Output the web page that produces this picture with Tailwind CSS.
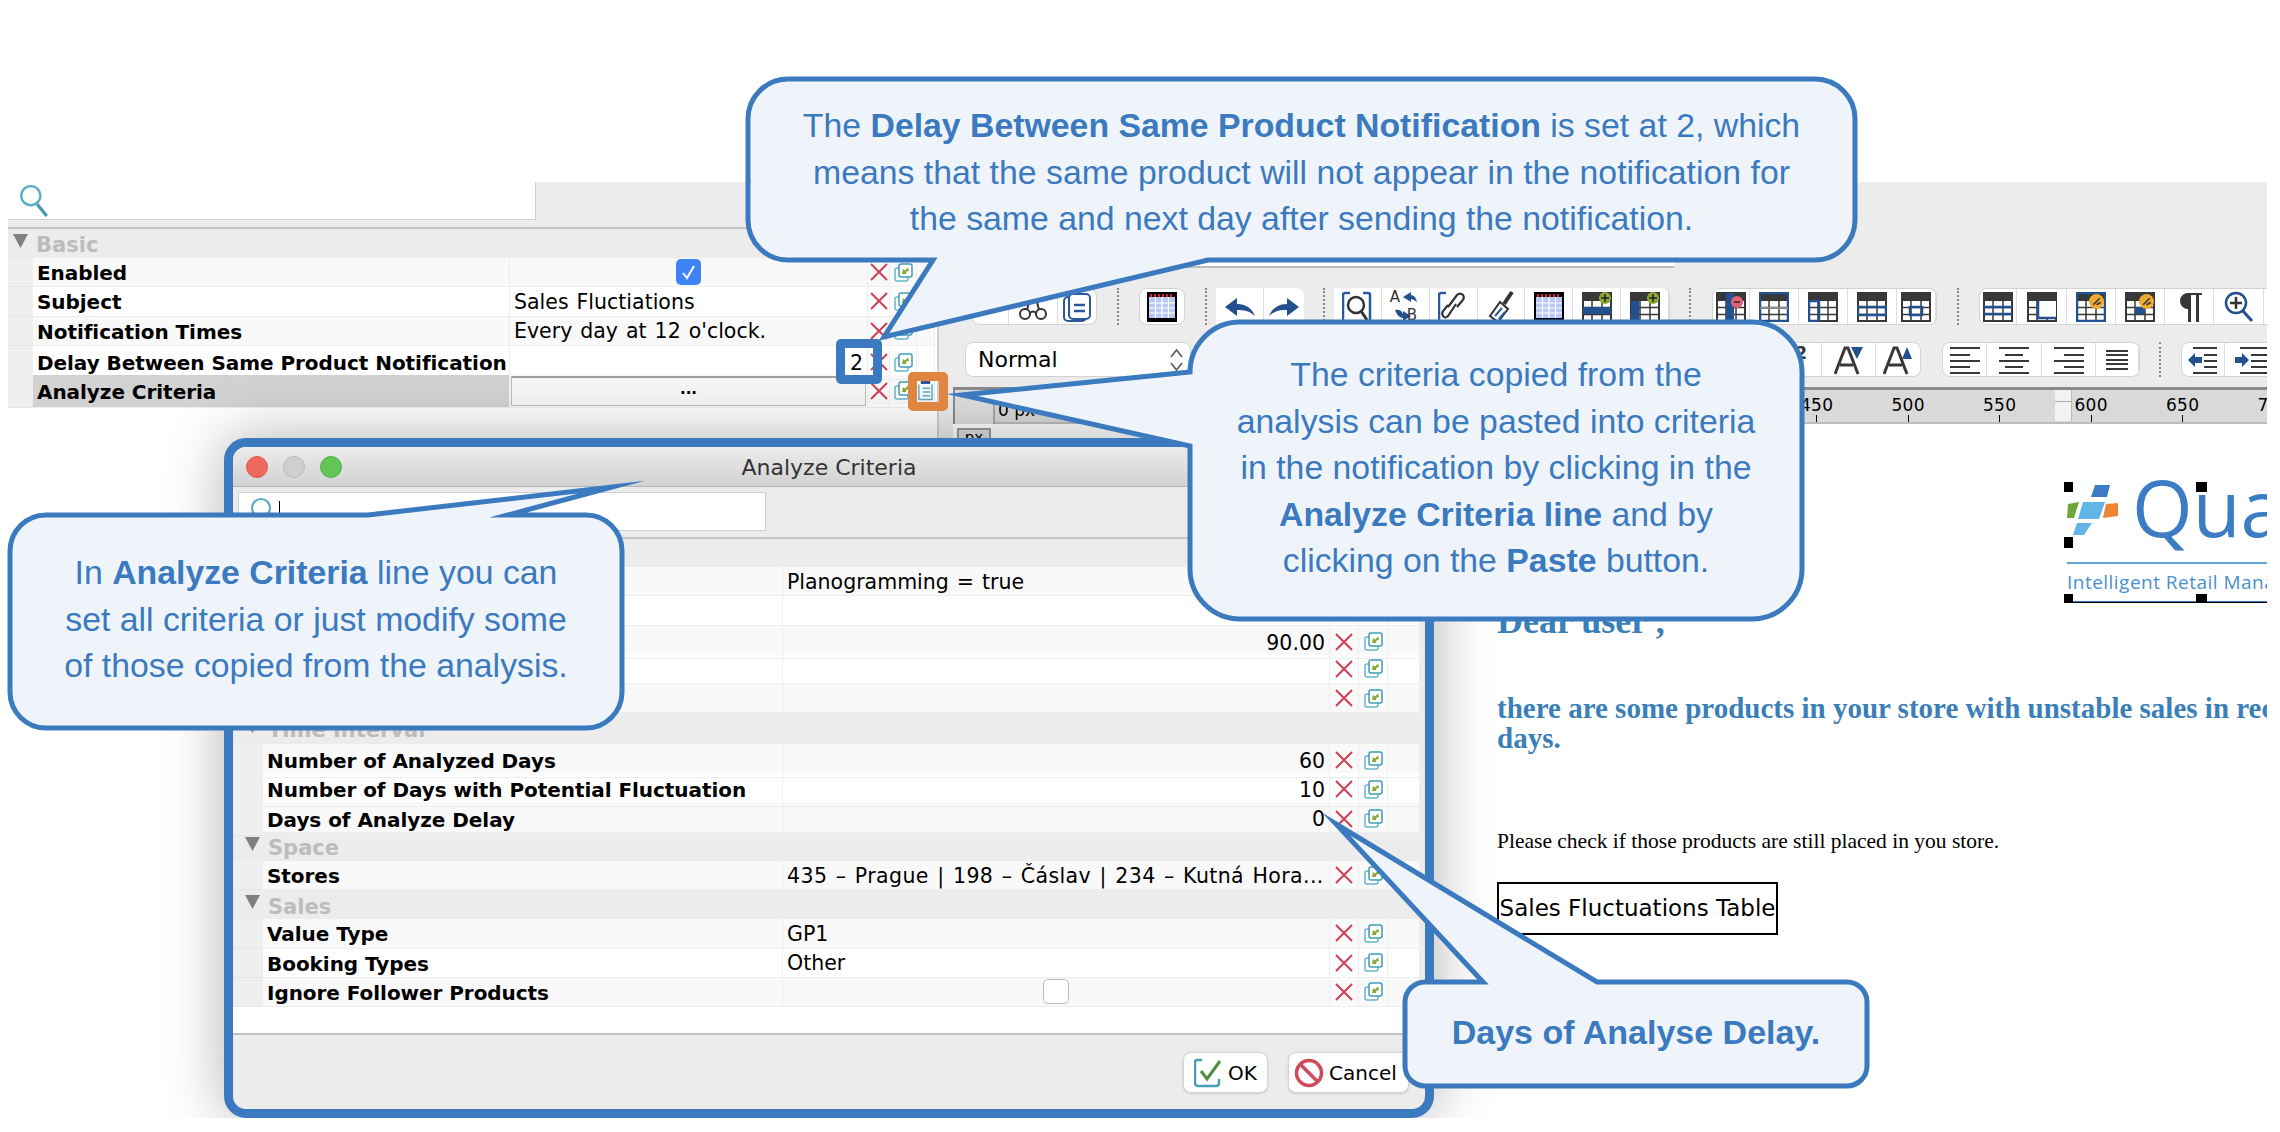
<!DOCTYPE html>
<html lang="en">
  <head>
    <meta charset="UTF-8" />
    <title>Analyze Criteria</title>
    <script src="https://cdn.jsdelivr.net/npm/@tailwindcss/browser@4"></script>
  </head>
  <body class="bg-white w-[2280px] h-[1132px] overflow-hidden relative font-['DejaVu_Sans',sans-serif] text-black">
    <!-- shared icons -->
    <svg class="hidden">
      <symbol id="x" viewBox="0 0 18 18"><path d="M1 1L17 17M17 1L1 17" stroke="#cf3f55" stroke-width="2" fill="none" /></symbol>
      <symbol id="copy" viewBox="0 0 19 19">
        <rect x="1" y="5" width="13" height="13" rx="2" fill="#fff" stroke="#67b6cb" stroke-width="1.5" />
        <rect x="5" y="1" width="13" height="13" rx="2" fill="#fff" stroke="#3f9db8" stroke-width="1.5" />
        <path d="M8 11L9 6L11 7.500L14 4.500L15 8L12.500 8.500L12 11Z" fill="#8aa832" />
      </symbol>
      <symbol id="grid" viewBox="0 0 30 30">
        <rect x="1" y="1" width="28" height="28" fill="#fff" stroke="#383838" stroke-width="2" />
        <rect width="30" height="9" fill="#383838" />
        <path d="M1 15.500H29M1 22.500H29M10 9V29M20 9V29" stroke="#383838" stroke-width="1.500" />
      </symbol>
      <symbol id="cal" viewBox="0 0 30 30">
        <rect width="30" height="30" fill="#000" />
        <rect x="2" y="5" width="26" height="21" fill="#b7c9f2" />
        <path d="M2 11H28M2 16H28M2 21H28M8.500 5V26M15 5V26M21.500 5V26" stroke="#fff" stroke-width="1.200" />
        <path d="M3 3.500H27" stroke="#d81f3a" stroke-width="3" stroke-dasharray="2 2" />
      </symbol>
      <symbol id="wrench" viewBox="0 0 14 14"><circle cx="7" cy="7" r="7" fill="#eeaa33" /><path d="M4 10L10 4M7 10L11 8" stroke="#383838" stroke-width="1.500" /></symbol>
    </svg>

    <!-- application -->
    <div class="h-[1118px] pt-[182px] pl-2 pr-[13px] overflow-hidden relative">
      <div class="flex h-full">
        <!-- left properties panel -->
        <div class="w-[929px] flex-none">
          <div class="h-[47px] bg-[#ececec] border-b-2 border-[#c4c4c4]">
            <div class="w-[528px] h-[38px] bg-white border-b border-r border-[#d0d0d0] flex items-center pl-[10px]">
              <svg width="32" height="34" viewBox="0 0 30 32"><circle cx="12" cy="11" r="9" fill="none" stroke="#58aec6" stroke-width="2.200" /><path d="M18 19L27 30" stroke="#4b97b3" stroke-width="3" /></svg>
            </div>
          </div>
          <div id="left_table" class="w-[927px]"></div>
        </div>

        <!-- right editor panel -->
        <div class="flex-1 border-l-2 border-[#cfcfcf] bg-[#ececec] flex flex-col min-w-0">
          <div class="h-[86px] flex-none pt-[58px] pl-[240px]"><div class="w-[495px] h-[28px] bg-white border-b-2 border-[#bbbbbb]"></div></div>

          <!-- toolbar row 1 -->
          <div class="h-[37px] mt-5 flex-none flex items-stretch pl-[33px] overflow-hidden [&>*]:flex-none">
            <div class="w-[125px] flex bg-white rounded-lg border border-[#d3d3d3]">
              <div class="w-[36px] border-r border-[#ddd]"></div>
              <div class="w-[49px] border-r border-[#ddd] flex items-center justify-center">
                <svg width="30" height="30" viewBox="0 0 30 30"><circle cx="7" cy="22" r="5" fill="none" stroke="#333" stroke-width="2" /><circle cx="23" cy="22" r="5" fill="none" stroke="#333" stroke-width="2" /><path d="M12 21Q15 18 18 21M9 18L12 6M21 18L18 6" fill="none" stroke="#333" stroke-width="2" /></svg>
              </div>
              <div class="flex-1 flex items-center justify-center">
                <svg width="30" height="30" viewBox="0 0 30 30"><rect x="2" y="5" width="22" height="24" rx="4" fill="#fff" stroke="#2a5a9c" stroke-width="2" /><rect x="7" y="2" width="21" height="25" rx="4" fill="#fff" stroke="#2a5a9c" stroke-width="2" /><path d="M12 13H23M12 19H23" stroke="#2a5a9c" stroke-width="2.500" /></svg>
              </div>
            </div>
            <div class="w-[2px] ml-[20px] border-l-2 border-dotted border-[#888]"></div>
            <div class="w-[46px] ml-[20px] bg-white rounded-lg border border-[#d3d3d3] flex items-center justify-center"><svg width="30" height="30"><use href="#cal" /></svg></div>
            <div class="w-[2px] ml-[20px] border-l-2 border-dotted border-[#888]"></div>
            <div class="w-[88px] ml-[9px] bg-white rounded-r-lg flex">
              <div class="w-[48px] border-r border-[#ddd] flex items-center justify-center"><svg width="32" height="22" viewBox="0 0 32 22"><path d="M1 11L13 2V8Q26 8 31 20Q24 13 13 14V20Z" fill="#23508e" /></svg></div>
              <div class="flex-1 flex items-center justify-center"><svg width="32" height="22" viewBox="0 0 32 22"><path d="M31 11L19 2V8Q6 8 1 20Q8 13 19 14V20Z" fill="#23508e" /></svg></div>
            </div>
            <div class="w-[2px] ml-[19px] border-l-2 border-dotted border-[#888]"></div>
            <div class="w-[336px] ml-[9px] bg-white rounded-r-lg border-r border-[#d3d3d3] flex [&>div]:w-[48px] [&>div]:border-r [&>div]:border-[#ddd] [&>div]:flex [&>div]:items-center [&>div]:justify-center">
              <div><svg width="30" height="34" viewBox="0 0 30 34"><path d="M8 3H3Q1 3 1 5V30Q1 32 3 32H8M21 3H26Q28 3 28 5V30" fill="none" stroke="#2a5a9c" stroke-width="2.500" /><circle cx="14" cy="15" r="8" fill="none" stroke="#333" stroke-width="2.500" /><path d="M19 21L25 30" stroke="#333" stroke-width="3" /></svg></div>
              <div class="relative"><span class="absolute left-[8px] top-[2px] text-[15px] leading-none text-[#333]">A</span><span class="absolute left-[25px] top-[20px] text-[15px] leading-none text-[#333]">B</span><svg width="32" height="34" viewBox="0 0 32 34"><path d="M14 7L22 2V5Q27 6 28 12Q24 9 22 9V12ZM6 20Q12 19 14 24V21L22 26L14 31V28Q9 28 6 20Z" fill="#23508e" /></svg></div>
              <div><svg width="30" height="34" viewBox="0 0 30 34"><path d="M8 3H3Q1 3 1 5V30Q1 32 3 32H8" fill="none" stroke="#2a5a9c" stroke-width="2.500" /><path d="M10 17L19 5Q22 2 25 5Q27 8 24 11L19 17M18 14L10 26Q7 29 5 26Q3 23 6 20L10 15" fill="none" stroke="#333" stroke-width="2.200" /></svg></div>
              <div><svg width="30" height="34" viewBox="0 0 30 34"><path d="M26 2L18 14" stroke="#333" stroke-width="4" /><path d="M14 12L22 19L12 32L4 26Z" fill="#fff" stroke="#333" stroke-width="2" /><path d="M9 26L16 18M13 29L19 22" stroke="#2a5a9c" stroke-width="2" /></svg></div>
              <div><svg width="30" height="30"><use href="#cal" /></svg></div>
              <div><svg width="30" height="30" viewBox="0 0 30 30"><use href="#grid" /><rect x="1" y="15" width="28" height="7" fill="#23508e" /><circle cx="23" cy="6" r="6" fill="#8ca83a" /><path d="M23 2V10M19 6H27" stroke="#222" stroke-width="1.500" /></svg></div>
              <div class="border-r-0"><svg width="30" height="30" viewBox="0 0 30 30"><use href="#grid" /><rect x="1" y="9" width="8" height="20" fill="#23508e" /><circle cx="23" cy="6" r="6" fill="#8ca83a" /><path d="M23 2V10M19 6H27" stroke="#222" stroke-width="1.500" /></svg></div>
            </div>
            <div class="w-[2px] ml-[19px] border-l-2 border-dotted border-[#888]"></div>
            <div class="w-[225px] ml-[21px] bg-white rounded-lg border border-[#d3d3d3] flex [&>div]:border-r [&>div]:border-[#ddd] [&>div]:flex [&>div]:items-center [&>div]:justify-center">
              <div class="w-[37px]"><svg width="30" height="30" viewBox="0 0 30 30"><use href="#grid" /><rect x="10" y="1" width="8" height="28" fill="#23508e" /><circle cx="21" cy="10" r="6" fill="#e36078" /><path d="M18 10H24" stroke="#222" stroke-width="1.500" /></svg></div>
              <div class="w-[49px]"><svg width="30" height="30" viewBox="0 0 30 30"><use href="#grid" /><rect x="1" y="1" width="28" height="28" fill="none" stroke="#23508e" stroke-width="2.500" /><path d="M1 16H29" stroke="#8a8a8a" stroke-width="2" /></svg></div>
              <div class="w-[49px]"><svg width="30" height="30" viewBox="0 0 30 30"><use href="#grid" /><rect x="1" y="9" width="10" height="20" fill="none" stroke="#23508e" stroke-width="2.500" /></svg></div>
              <div class="w-[49px]"><svg width="30" height="30" viewBox="0 0 30 30"><use href="#grid" /><rect x="1" y="15" width="28" height="8" fill="none" stroke="#23508e" stroke-width="2.500" /></svg></div>
              <div class="flex-1 border-r-0"><svg width="30" height="30" viewBox="0 0 30 30"><use href="#grid" /><rect x="9" y="15" width="12" height="8" fill="none" stroke="#23508e" stroke-width="2.500" /></svg></div>
            </div>
            <div class="w-[2px] ml-[20px] border-l-2 border-dotted border-[#888]"></div>
            <div class="w-[320px] ml-[20px] bg-white rounded-l-lg border border-[#d3d3d3] flex [&>div]:border-r [&>div]:border-[#ddd] [&>div]:flex [&>div]:items-center [&>div]:justify-center">
              <div class="w-[37px]"><svg width="30" height="30" viewBox="0 0 30 30"><use href="#grid" /><path d="M1 15H29M1 22H29" stroke="#23508e" stroke-width="2.500" /></svg></div>
              <div class="w-[50px]"><svg width="30" height="30" viewBox="0 0 30 30"><use href="#grid" /><rect x="11" y="9" width="18" height="18" fill="#fff" /><path d="M11 9V26H29" fill="none" stroke="#23508e" stroke-width="2.500" /></svg></div>
              <div class="w-[49px] relative"><svg width="30" height="30" viewBox="0 0 30 30"><use href="#grid" /><rect x="1" y="1" width="28" height="28" fill="none" stroke="#23508e" stroke-width="2.500" /><use href="#wrench" x="13" y="2" width="15" height="15" /></svg></div>
              <div class="w-[49px]"><svg width="30" height="30" viewBox="0 0 30 30"><use href="#grid" /><rect x="10" y="15" width="10" height="7" fill="#23508e" /><use href="#wrench" x="14" y="2" width="15" height="15" /></svg></div>
              <div class="w-[49px]"><svg width="26" height="32" viewBox="0 0 26 32"><path d="M12 2A8 8 0 0 0 12 18V31H15V4H20V31H23V4H26V2Z" fill="#383838" /></svg></div>
              <div class="w-[50px]"><svg width="30" height="32" viewBox="0 0 30 32"><circle cx="12" cy="12" r="10" fill="#fff" stroke="#23508e" stroke-width="2.500" /><path d="M19 20L28 30" stroke="#23508e" stroke-width="3" /><path d="M12 6V18M6 12H18" stroke="#333" stroke-width="2.500" /></svg></div>
              <div class="flex-1"></div>
            </div>
          </div>

          <!-- toolbar row 2 -->
          <div class="h-[35px] mt-[17px] flex-none flex items-stretch pl-[26px] overflow-hidden [&>*]:flex-none">
            <div class="w-[226px] bg-white rounded-lg border border-[#d3d3d3] flex items-center justify-between pl-3 pr-[7px] text-[22px]">
              <span>Normal</span>
              <svg width="13" height="24" viewBox="0 0 13 24"><path d="M1 9L6.500 2L12 9M1 15L6.500 22L12 15" fill="none" stroke="#555" stroke-width="1.500" /></svg>
            </div>
            <div class="w-[725px] ml-[5px] bg-white rounded-r-lg border border-[#d3d3d3] flex items-center justify-end">
              <span class="text-[17px] font-bold text-[#333] mr-[14px] -mt-[12px]">2</span>
              <div class="w-[55px] h-full border-l border-r border-[#ddd] flex items-center justify-center">
                <svg width="30" height="30" viewBox="0 0 30 30"><path d="M1 29L11 3H14L24 29M6 20H19" fill="none" stroke="#383838" stroke-width="3" /><path d="M17 2H29L23 14Z" fill="#23508e" /></svg>
              </div>
              <div class="w-[44px] h-full flex items-center justify-center">
                <svg width="30" height="30" viewBox="0 0 30 30"><path d="M1 29L11 3H14L24 29M6 20H19" fill="none" stroke="#383838" stroke-width="3" /><path d="M19 14H29L24 2Z" fill="#23508e" /></svg>
              </div>
            </div>
            <div class="w-[198px] ml-[21px] bg-white rounded-lg border border-[#d3d3d3] flex [&>div]:border-r [&>div]:border-[#ddd] [&>div]:flex [&>div]:items-center [&>div]:justify-center">
              <div class="w-[44px]"><svg width="30" height="30" viewBox="0 0 30 30"><path d="M0 3H30M0 10H20M0 16H30M0 22H20M0 28H30" stroke="#383838" stroke-width="2.200" /></svg></div>
              <div class="w-[55px]"><svg width="30" height="30" viewBox="0 0 30 30"><path d="M0 3H30M6 10H24M0 16H30M6 22H24M0 28H30" stroke="#383838" stroke-width="2.200" /></svg></div>
              <div class="w-[54px]"><svg width="30" height="30" viewBox="0 0 30 30"><path d="M0 3H30M10 10H30M0 16H30M10 22H30M0 28H30" stroke="#383838" stroke-width="2.200" /></svg></div>
              <div class="flex-1 border-r-0"><svg width="22" height="20" viewBox="0 0 22 20"><path d="M0 1H22M0 5H22M0 10H22M0 14H22M0 19H22" stroke="#383838" stroke-width="2" /></svg></div>
            </div>
            <div class="w-[2px] ml-[19px] border-l-2 border-dotted border-[#888]"></div>
            <div class="w-[110px] ml-[20px] bg-white rounded-l-lg border border-[#d3d3d3] flex">
              <div class="w-[43px] border-r border-[#ddd] flex items-center justify-center"><svg width="30" height="30" viewBox="0 0 30 30"><path d="M5 3H29M16 10H29M16 16H29M16 22H29M5 28H29" stroke="#383838" stroke-width="2.200" /><path d="M0 15L7 8V12H14V18H7V22Z" fill="#23508e" /></svg></div>
              <div class="flex-1 flex items-center pl-[10px]"><svg width="32" height="30" viewBox="0 0 32 30"><path d="M5 3H32M16 10H32M16 16H32M16 22H32M5 28H32" stroke="#383838" stroke-width="2.200" /><path d="M14 15L7 8V12H0V18H7V22Z" fill="#23508e" /></svg></div>
            </div>
          </div>

          <!-- ruler -->
          <div class="ml-[14px] mt-[10px] flex-none h-[37px] border-t-[3px] border-[#8a8a8a] border-l-2 bg-[#ececec] flex overflow-hidden">
            <div class="w-[40px] flex-none h-full bg-[#dedede] border-r-2 border-[#a8a8a8]"></div>
            <div class="flex-1 min-w-0 bg-[#d9d9d9] border-b-2 border-[#bcbcbc] relative pl-[776px] flex">
              <span class="absolute left-[3px] top-[8px] text-[17px]">0 px</span>
              <div class="flex-none w-[91.5px] flex flex-col items-center justify-end text-[17px] leading-[20px] tracking-wide"><span>450</span><i class="w-px h-[7px] bg-black"></i></div>
              <div class="flex-none w-[91.5px] flex flex-col items-center justify-end text-[17px] leading-[20px] tracking-wide"><span>500</span><i class="w-px h-[7px] bg-black"></i></div>
              <div class="flex-none w-[91.5px] flex flex-col items-center justify-end text-[17px] leading-[20px] tracking-wide"><span>550</span><i class="w-px h-[7px] bg-black"></i></div>
              <div class="flex-none w-[91.5px] flex flex-col items-center justify-end text-[17px] leading-[20px] tracking-wide"><span>600</span><i class="w-px h-[7px] bg-black"></i></div>
              <div class="flex-none w-[91.5px] flex flex-col items-center justify-end text-[17px] leading-[20px] tracking-wide"><span>650</span><i class="w-px h-[7px] bg-black"></i></div>
              <div class="flex-none w-[91.5px] flex flex-col items-center justify-end text-[17px] leading-[20px] tracking-wide"><span>700</span><i class="w-px h-[7px] bg-black"></i></div>
              <div class="absolute left-[1060px] top-0 w-[17px] h-[31px] bg-[#f2f2f2] border-r border-[#bbb]"><div class="h-[12px] border-b border-[#aaa]"></div></div>
            </div>
          </div>

          <!-- document -->
          <div class="ml-[14px] flex-1 bg-white flex min-h-0 overflow-hidden">
            <div class="w-[40px] flex-none pt-1 bg-white"><div class="w-[34px] h-[24px] ml-1 bg-[#dedede] border-2 border-[#999] text-[15px] leading-4 text-center">px</div></div>
            <div class="flex-1 pl-[504px] pt-[58px] min-w-0">
              <div class="relative ml-[567px] w-[300px] h-[121px] pt-[2px] pl-[3px]">
                <div class="flex items-center h-[54px]">
                  <svg width="52" height="54" viewBox="0 0 52 54" class="flex-none">
                    <path d="M28 1H43L40 13H24Z" fill="#3b7cc4" />
                    <path d="M16 18H38L32 35H11Z" fill="#62b5e8" />
                    <path d="M10 39H25L17 51H6Z" fill="#62b5e8" />
                    <path d="M1 20L12 18L7 34H0Z" fill="#6fa838" />
                    <path d="M39 20L51 19V32L36 34Z" fill="#ee8530" />
                  </svg>
                  <span class="font-['Open_Sans'] font-medium text-[78px] leading-none text-[#3b7cc4] ml-[13px] -mt-2">Qua</span>
                </div>
                <div class="h-[2px] bg-[#62a3d8] mt-[24px]"></div>
                <div class="font-['Open_Sans'] text-[19px] text-[#4a8fcf] whitespace-nowrap mt-1 tracking-wide">Intelligent Retail Management</div>
                <div class="absolute left-1 right-0 bottom-0 h-[2px] bg-[#3b7cc4] border-b border-black"></div>
                <i class="absolute left-0 top-0 w-[9px] h-[10px] bg-black"></i>
                <i class="absolute left-[132px] top-0 w-[11px] h-[10px] bg-black"></i>
                <i class="absolute left-0 top-[55px] w-[9px] h-[11px] bg-black"></i>
                <i class="absolute left-0 bottom-0 w-[9px] h-[9px] bg-black"></i>
                <i class="absolute left-[132px] bottom-0 w-[11px] h-[9px] bg-black"></i>
              </div>
              <p class="font-['Liberation_Serif'] font-bold text-[36px] leading-[40px] text-[#3a7fb8] -mt-[2px]">Dear user ,</p>
              <p class="font-['Liberation_Serif'] font-bold text-[29px] leading-[30px] text-[#3a7fb8] mt-[52px] whitespace-nowrap">there are some products in your store with unstable sales in recent<br />days.</p>
              <p class="font-['Liberation_Serif'] text-[21.5px] leading-[26px] mt-[75px] whitespace-nowrap">Please check if those products are still placed in you store.</p>
              <div class="w-[281px] h-[53px] mt-[28px] border-2 border-black flex items-center justify-center text-[23px] whitespace-nowrap">Sales Fluctuations Table</div>
            </div>
          </div>
        </div>
      </div>

      <!-- dialog -->
      <div class="absolute left-[224px] top-[438px] w-[1210px] h-[680px] border-[9px] border-[#3b7abf] rounded-[22px] bg-[#ececec] shadow-[0_0_60px_rgba(0,0,0,0.3)] flex flex-col overflow-hidden">
        <div class="relative flex-none h-[40px] pt-[2px] bg-gradient-to-b from-[#ececec] to-[#d2d2d2] border-b border-[#b5b5b5] flex items-center justify-center text-[22px] text-[#333]">
          Analyze Criteria
          <div class="absolute left-[13px] top-[9px] flex gap-[15px]">
            <i class="w-[22px] h-[22px] rounded-full bg-[#ee6a5f] border border-[#d9584e]"></i>
            <i class="w-[22px] h-[22px] rounded-full bg-[#cfcfcf] border border-[#bbb]"></i>
            <i class="w-[22px] h-[22px] rounded-full bg-[#62c555] border border-[#52b046]"></i>
          </div>
        </div>
        <div class="flex-none h-[52px] border-b-2 border-[#c4c4c4] pt-[5px] pl-[5px]">
          <div class="w-[528px] h-[39px] bg-white border border-[#cfcfcf] flex items-center pl-[10px]">
            <svg width="28" height="30" viewBox="0 0 28 30"><circle cx="12" cy="11" r="9" fill="none" stroke="#58aec6" stroke-width="2.200" /><path d="M18 19L26 29" stroke="#4b97b3" stroke-width="3" /></svg>
            <i class="w-px h-[22px] bg-black ml-[2px]"></i>
          </div>
        </div>
        <div class="flex-none w-[1187px] h-[496px] bg-white border-b-2 border-[#c0c0c0] mr-auto">
          <div id="dialog_table"></div>
        </div>
        <div class="flex-1 flex justify-end items-start gap-5 pt-[17px] pr-4">
          <div class="w-[85px] h-[41px] bg-white rounded-lg border border-[#d3d3d3] shadow-sm flex items-center justify-center gap-1 text-[20px]">
            <svg width="30" height="30" viewBox="0 0 30 30"><path d="M8 2H3Q1 2 1 4V25Q1 28 4 28H22Q25 28 25 25V21" fill="none" stroke="#4a9fb8" stroke-width="2.500" /><path d="M7 13L13 21L26 3" fill="none" stroke="#4f8f3f" stroke-width="3" /></svg>
            OK
          </div>
          <div class="w-[121px] h-[41px] bg-white rounded-lg border border-[#d3d3d3] shadow-sm flex items-center justify-start pl-[5px] gap-[5px] text-[20px]">
            <svg width="30" height="30" viewBox="0 0 30 30"><circle cx="15" cy="15" r="12.500" fill="none" stroke="#cf4b5c" stroke-width="3.500" /><path d="M6 6L24 24" stroke="#cf4b5c" stroke-width="3.500" /></svg>
            Cancel
          </div>
        </div>
      </div>
    </div>

    <!-- highlight boxes -->
    <div class="absolute left-[836px] top-[339px] w-[46px] h-[45px] border-[9px] border-[#3b7abf] rounded-[5px] z-10"></div>
    <div class="absolute left-[908px] top-[372px] w-[40px] h-[39px] border-[9px] border-[#e08540] rounded-[5px] z-10"></div>

    <!-- callouts -->
    <svg class="absolute inset-0 z-20" width="2280" height="1132" viewBox="0 0 2280 1132" fill="#eff4fa" stroke="#3b7abf" stroke-width="5" stroke-miterlimit="60">
      <path d="M788 79H1815A40 40 0 0 1 1855 119V220A40 40 0 0 1 1815 260H1208L884 337L933 260H788A40 40 0 0 1 748 220V119A40 40 0 0 1 788 79Z" />
      <path d="M1240 322H1752A50 50 0 0 1 1802 372V569A50 50 0 0 1 1752 619H1240A50 50 0 0 1 1190 569V446L962 395L1190 372A50 50 0 0 1 1240 322Z" />
      <path d="M46 515H368L612 487L508 515H586A36 36 0 0 1 622 551V692A36 36 0 0 1 586 728H46A36 36 0 0 1 10 692V551A36 36 0 0 1 46 515Z" />
      <path d="M1425 982H1483L1336 824L1597 982H1847A20 20 0 0 1 1867 1002V1066A20 20 0 0 1 1847 1086H1425A20 20 0 0 1 1405 1066V1002A20 20 0 0 1 1425 982Z" />
    </svg>
    <div class="absolute z-30 left-[748px] top-[102px] w-[1107px] text-center font-['Liberation_Sans'] text-[33.8px] leading-[46.5px] text-[#3b7abf]">
      The <b>Delay Between Same Product Notification</b> is set at 2, which<br />means that the same product will not appear in the notification for<br />the same and next day after sending the notification.
    </div>
    <div class="absolute z-30 left-[1190px] top-[351px] w-[612px] text-center font-['Liberation_Sans'] text-[33.8px] leading-[46.5px] text-[#3b7abf]">
      The criteria copied from the<br />analysis can be pasted into criteria<br />in the notification by clicking in the<br /><b>Analyze Criteria line</b> and by<br />clicking on the <b>Paste</b> button.
    </div>
    <div class="absolute z-30 left-[10px] top-[549px] w-[612px] text-center font-['Liberation_Sans'] text-[33.8px] leading-[46.5px] text-[#3b7abf]">
      In <b>Analyze Criteria</b> line you can<br />set all criteria or just modify some<br />of those copied from the analysis.
    </div>
    <div class="absolute z-30 left-[1405px] top-[1009px] w-[462px] text-center font-['Liberation_Sans'] font-bold text-[34px] leading-[46.5px] text-[#3b7abf]">Days of Analyse Delay.</div>

    <script>
      const left_cols = "grid grid-cols-[25px_477px_358px_22px_27px_18px] h-[29.25px]";
      const dialog_cols = "grid grid-cols-[30px_520px_547px_29px_29px_1fr] h-[29.25px]";
      const cell = "border-b border-r border-[#eeeeee] flex items-center";

      function row(cols, label, value, shade) {
        const bg = shade ? "bg-[#f9f9f9]" : "bg-white";
        let val = `<div class="${cell} pl-1 pt-[2px] whitespace-nowrap overflow-hidden [word-spacing:1.5px]">${value}</div>`;
        if (value === "check") {
          val = `<div class="${cell} justify-center"><span class="w-[25px] h-[26px] rounded-[5px] bg-[#3f83f8] flex items-center justify-center"><svg width="13" height="16" viewBox="0 0 13 16"><path d="M1 9L5 14L12 2" fill="none" stroke="#fff" stroke-width="2" /></svg></span></div>`;
        }
        if (value === "empty_check") {
          val = `<div class="${cell} justify-center"><span class="w-[26px] h-[25px] rounded-[5px] bg-white border border-[#bbbbbb]"></span></div>`;
        }
        if (value === "button") {
          val = `<div class="${cell} p-px"><span class="w-full h-full bg-[#f6f6f6] border border-[#bdbdbd] border-t-2 border-t-[#a0a0a0] flex items-center justify-center font-bold text-[15px] pb-1">...</span></div>`;
        }
        if (/^[0-9.]+$/.test(value)) {
          val = `<div class="${cell} justify-end pr-1 pt-[2px]">${value}</div>`;
        }
        return `<div class="${cols} ${bg} text-[20.5px]">
          <div class="bg-[#efefef] border-b border-[#e4e4e4]"></div>
          <div class="${label === "Analyze Criteria" ? "bg-[#d2d2d2]" : ""} ${cell} pl-1 pt-[2px] font-bold text-[20px] tracking-[-0.05px] whitespace-nowrap overflow-hidden">${label}</div>
          ${val}
          <div class="${cell} justify-center"><svg width="18" height="18"><use href="#x" /></svg></div>
          <div class="${cell} justify-center"><svg width="19" height="19"><use href="#copy" /></svg></div>
          <div class="${cell}">${label === "Analyze Criteria" ? '<svg width="18" height="20" viewBox="0 0 18 20"><path d="M4 1H14" stroke="#2a4f8f" stroke-width="3" /><path d="M2 3V19H16V3" fill="none" stroke="#58aec6" stroke-width="1.500" /><path d="M6 7H14M6 11H14M6 15H14" stroke="#58aec6" stroke-width="1.500" /></svg>' : ""}</div>
        </div>`;
      }

      function section(name, classes) {
        return `<div class="${classes} bg-[#ececec] flex items-center font-bold text-[21px] text-[#bcbcbc] pt-[5px]">
          <svg width="15" height="14" viewBox="0 0 15 14" class="-mt-[10px]"><path d="M0 0H15L7.500 14Z" fill="#808080" /></svg>${name}
        </div>`;
      }

      document.getElementById("left_table").innerHTML =
        section("Basic", "h-[29px] pl-[5px] gap-[8px]") +
        row(left_cols, "Enabled", "check", true) +
        row(left_cols, "Subject", "Sales Fluctiations", false) +
        row(left_cols, "Notification Times", "Every day at 12 o'clock.", true) +
        row(left_cols, "Delay Between Same Product Notification", "2", false) +
        row(left_cols, "Analyze Criteria", "button", true);

      document.getElementById("dialog_table").innerHTML =
        section("Product", "h-[28px] pl-[12px] gap-[8px]") +
        row(dialog_cols, "Product Filter", "Planogramming = true", true) +
        row(dialog_cols, "Minimal Fluctuation", "", false) +
        row(dialog_cols, "Fluctuation Percent", "90.00", true) +
        row(dialog_cols, "Minimal Sales", "", false) +
        row(dialog_cols, "Maximal Sales", "", true) +
        section("Time Interval", "h-[30.5px] pl-[12px] gap-[8px]") +
        row(dialog_cols, "Number of Analyzed Days", "60", true) +
        row(dialog_cols, "Number of Days with Potential Fluctuation", "10", false) +
        row(dialog_cols, "Days of Analyze Delay", "0", true) +
        section("Space", "h-[29.5px] pl-[12px] gap-[8px]") +
        row(dialog_cols, "Stores", '<span class="tracking-[0.4px]">435 – Prague | 198 – Čáslav | 234 – Kutná Hora...</span>', true) +
        section("Sales", "h-[29px] pl-[12px] gap-[8px]") +
        row(dialog_cols, "Value Type", "GP1", true) +
        row(dialog_cols, "Booking Types", "Other", false) +
        row(dialog_cols, "Ignore Follower Products", "empty_check", true);
    </script>
  </body>
</html>
